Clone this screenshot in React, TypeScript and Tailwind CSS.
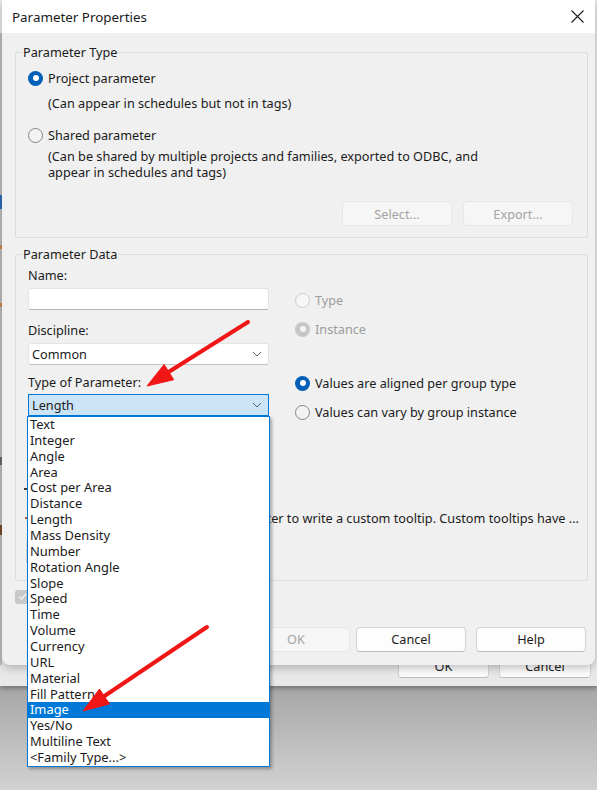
import React from "react";

const TYPES = [
  "Text",
  "Integer",
  "Angle",
  "Area",
  "Cost per Area",
  "Distance",
  "Length",
  "Mass Density",
  "Number",
  "Rotation Angle",
  "Slope",
  "Speed",
  "Time",
  "Volume",
  "Currency",
  "URL",
  "Material",
  "Fill Pattern",
  "Image",
  "Yes/No",
  "Multiline Text",
  "<Family Type...>",
];

type RadioState = "on" | "off" | "disabled-off" | "disabled-on";

function Radio({ state }: { state: RadioState }) {
  if (state === "on") {
    return (
      <span className="flex h-[15px] w-[15px] shrink-0 items-center justify-center rounded-full bg-[#005fb8]">
        <span className="h-[6px] w-[6px] rounded-full bg-white" />
      </span>
    );
  }
  if (state === "disabled-on") {
    return (
      <span className="flex h-[15px] w-[15px] shrink-0 items-center justify-center rounded-full bg-[#c6c6c6]">
        <span className="h-[6px] w-[6px] rounded-full bg-[#f4f4f4]" />
      </span>
    );
  }
  if (state === "disabled-off") {
    return <span className="h-[15px] w-[15px] shrink-0 rounded-full border border-[#cdcdcd] bg-[#f6f6f6]" />;
  }
  return <span className="h-[15px] w-[15px] shrink-0 rounded-full border border-[#858585] bg-[#f3f3f3]" />;
}

function RadioRow({ state, label, className }: { state: RadioState; label: string; className?: string }) {
  const dim = state.startsWith("disabled");
  return (
    <div className={`flex h-[18px] items-center gap-[5px] ${className ?? ""}`}>
      <Radio state={state} />
      <span className={dim ? "text-[#9d9d9d]" : "text-[#1b1b1b]"}>{label}</span>
    </div>
  );
}

function Chevron() {
  return (
    <svg width="10" height="6" viewBox="0 0 10 6" className="shrink-0">
      <path d="M1 1 L5 5 L9 1" fill="none" stroke="#5f5f5f" strokeWidth="1" />
    </svg>
  );
}

function Button({ label, disabled, className }: { label?: string; disabled?: boolean; className?: string }) {
  return (
    <div
      className={`flex h-[25px] items-center justify-center rounded-[4px] border ${
        disabled
          ? "border-[#e6e6e6] bg-[#f6f6f6] text-[#a3a3a3]"
          : "border-[#d3d3d3] border-b-[#bdbdbd] bg-[#fdfdfd] text-[#1b1b1b]"
      } ${className ?? ""}`}
    >
      {label}
    </div>
  );
}

export default function App() {
  return (
    <div className="relative flex h-[790px] w-[597px] flex-col overflow-hidden font-['Noto_Sans',sans-serif] text-[12.7px] leading-[16px] text-[#1b1b1b]">
      {/* window underneath the dialog */}
      <div className="relative flex h-[686px] shrink-0 flex-col justify-end bg-[#e9e9e9] shadow-[0_2px_5px_rgba(0,0,0,0.35)]">
        <div className="flex justify-end gap-[10px] pb-[8px] pr-[6px]">
          <Button label="OK" className="w-[91px] border-[#c9c9c9] bg-[#ededed]" />
          <Button label="Cancel" className="w-[92px] border-[#c9c9c9] bg-[#ededed]" />
        </div>
      </div>
      <div className="flex-1 bg-gradient-to-b from-[#a6a6a6] to-[#d2d2d2]" />

      {/* slivers of the application behind, on the left edge */}
      <div className="absolute left-0 top-[33px] flex h-[632px] w-[2px] flex-col bg-[#bdbdbd]">
        <div className="mt-[162px] h-[14px] bg-[#2f6fb8]" />
        <div className="mt-[36px] h-[4px] bg-[#c98a4a]" />
        <div className="mt-[54px] h-[4px] bg-[#c98a4a]" />
        <div className="mt-[150px] h-[8px] bg-[#6a6a6a]" />
        <div className="mt-[60px] h-[10px] bg-[#7a4a2a]" />
      </div>

      {/* Parameter Properties dialog */}
      <div className="absolute left-[2px] top-0 flex h-[665px] w-[593px] flex-col rounded-b-[8px] bg-[#f0f0f0] shadow-[0_3px_10px_rgba(0,0,0,0.25)]">
        <div className="flex h-[33px] shrink-0 items-center justify-between bg-white pl-[10px] pr-[11px]">
          <span className="text-[13.4px] text-[#1b1b1b]">Parameter Properties</span>
          <svg width="13" height="13" viewBox="0 0 13 13">
            <path d="M0.5 0.5 L12.5 12.5 M12.5 0.5 L0.5 12.5" stroke="#1b1b1b" strokeWidth="1.1" />
          </svg>
        </div>

        <div className="flex flex-1 flex-col pl-[13px] pr-[7px]">
          {/* Parameter Type */}
          <fieldset className="mt-[11px] rounded-[2px] border border-[#dcdcdc] px-[6px] pb-[11px]">
            <legend className="px-[1px] leading-[16px]">Parameter Type</legend>
            <div className="flex flex-col pl-[6px]">
              <RadioRow state="on" label="Project parameter" className="mt-[9px]" />
              <div className="ml-[20px] mt-[8px]">(Can appear in schedules but not in tags)</div>
              <RadioRow state="off" label="Shared parameter" className="mt-[15px]" />
              <div className="ml-[20px] mt-[4px]">
                (Can be shared by multiple projects and families, exported to ODBC, and
                <br />
                appear in schedules and tags)
              </div>
              <div className="mt-[21px] flex justify-end gap-[11px] pr-[8px]">
                <Button label="Select..." disabled className="w-[110px]" />
                <Button label="Export..." disabled className="w-[110px]" />
              </div>
            </div>
          </fieldset>

          {/* Parameter Data */}
          <fieldset className="mt-[8px] min-w-0 rounded-[2px] border border-[#dcdcdc] px-[6px] pb-[15px]">
            <legend className="px-[1px] leading-[16px]">Parameter Data</legend>
            <div className="flex min-w-0 flex-col pl-[6px]">
              <div className="flex">
                <div className="flex w-[241px] flex-col">
                  <div className="mt-[5px]">Name:</div>
                  <div className="mt-[5px] h-[22px] rounded-[3px] border border-[#e4e4e4] border-b-[#b5b5b5] bg-white" />
                  <div className="mt-[12px]">Discipline:</div>
                  <div className="mt-[5px] flex h-[22px] items-center justify-between rounded-[3px] border border-[#e4e4e4] border-b-[#c2c2c2] bg-white pl-[3px] pr-[6px]">
                    <span>Common</span>
                    <Chevron />
                  </div>
                  <div className="mt-[9px]">Type of Parameter:</div>
                  <div className="mt-[4px] flex h-[22px] items-center justify-between border border-[#0078d7] bg-[#cce4f7] pl-[3px] pr-[6px]">
                    <span>Length</span>
                    <Chevron />
                  </div>
                  {/* group box, covered by the open list */}
                  <div className="mt-[31px] h-[23px] rounded-[3px] border border-[#dcdcdc] border-b-[#c2c2c2] bg-[#fbfbfb]" />
                </div>
                <div className="ml-[26px] flex flex-col">
                  <RadioRow state="disabled-off" label="Type" className="mt-[29px]" />
                  <RadioRow state="disabled-on" label="Instance" className="mt-[11px]" />
                  <RadioRow state="on" label="Values are aligned per group type" className="mt-[36px]" />
                  <RadioRow state="off" label="Values can vary by group instance" className="mt-[11px]" />
                </div>
              </div>
              {/* edge of the tooltip caption peeking out left of the list */}
              <div className="-ml-[4px] mt-[18px] h-[1.5px] w-[3px] bg-[#3a3a3a]" />
              <div className="mt-[20px] flex h-[16px] min-w-0 items-center">
                <span className="-ml-[3px] h-[2px] w-[3px] shrink-0 bg-[#b5652e]" />
                <div className="ml-[200px] flex min-w-0 flex-1 justify-end overflow-hidden whitespace-nowrap pr-[2px]">
                  <span className="shrink-0">
                    &lt;No tooltip description. Edit this parameter to write a custom tooltip. Custom tooltips have ...
                  </span>
                </div>
              </div>
              <Button className="-ml-[2px] mt-[14px] h-[23px] w-[110px]" />
            </div>
          </fieldset>

          {/* bottom of dialog */}
          <div className="mt-[9px] flex items-center">
            <span className="flex h-[14px] w-[14px] items-center justify-center rounded-[3px] bg-[#c8c8c8]">
              <svg width="9" height="7" viewBox="0 0 9 7">
                <path d="M1 3.5 L3.4 6 L8 1" fill="none" stroke="#f3f3f3" strokeWidth="1.2" />
              </svg>
            </span>
          </div>
          <div className="mt-[23px] flex justify-end gap-[10px] pr-[2px]">
            <Button label="OK" disabled className="-mr-[4px] w-[108px]" />
            <Button label="Cancel" className="w-[110px]" />
            <Button label="Help" className="w-[110px]" />
          </div>
        </div>
      </div>

      {/* open list of the Type of Parameter box */}
      <div className="absolute left-[27px] top-[416px] flex w-[243px] flex-col border border-[#0078d7] bg-white text-[12.9px] shadow-[2px_2px_3px_rgba(0,0,0,0.3)]">
        {TYPES.map((t) => (
          <div
            key={t}
            className={`h-[15.86px] pl-[2px] leading-[15.86px] ${
              t === "Image" ? "bg-[#0078d7] text-white" : "text-[#1b1b1b]"
            }`}
          >
            {t}
          </div>
        ))}
      </div>

      {/* red callout arrows */}
      <svg className="pointer-events-none absolute left-0 top-0" width="597" height="790" viewBox="0 0 597 790">
        <g fill="#f01616" stroke="#f01616">
          <line x1="248" y1="322" x2="167" y2="373" strokeWidth="4" strokeLinecap="round" />
          <polygon points="147,386 173.7,379.7 164.1,364.5" strokeWidth="1" strokeLinejoin="round" />
          <line x1="207" y1="627" x2="103" y2="697" strokeWidth="4" strokeLinecap="round" />
          <polygon points="83,711 109.5,703.9 99.5,689" strokeWidth="1" strokeLinejoin="round" />
        </g>
      </svg>
    </div>
  );
}
